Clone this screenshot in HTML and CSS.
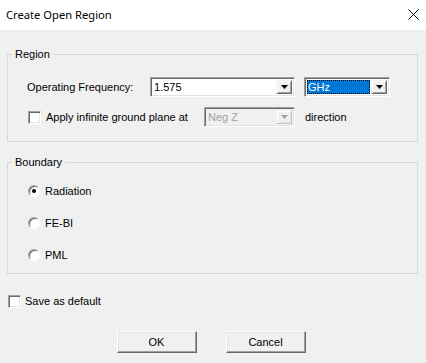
FILE: index.html
```html
<!DOCTYPE html>
<html lang="en">
<head>
    <meta charset="UTF-8" />
    <title>Create Open Region</title>
    <link rel="stylesheet" href="styles.css">
</head>
<body>
<div class="window">
    <div class="titlebar">
        <span class="title">Create Open Region</span>
        <span class="close">
            <svg width="11" height="11" viewBox="0 0 11 11"><path d="M0.5 0.5 L10.5 10.5 M10.5 0.5 L0.5 10.5" stroke="#000" stroke-width="1" fill="none"/></svg>
        </span>
    </div>

    <div class="dialog">
        <fieldset class="group region">
            <legend>Region</legend>
            <div class="group-body">
                <div class="row freq-row">
                    <span class="freq-label">Operating Frequency:</span>
                    <div class="combo combo-freq">
                        <span class="combo-text">1.575</span>
                        <span class="combo-btn"><svg width="7" height="4" viewBox="0 0 7 4"><polygon points="0,0 7,0 3.5,4" fill="#000"/></svg></span>
                    </div>
                    <div class="combo combo-unit">
                        <span class="combo-text selected">GHz</span>
                        <span class="combo-btn"><svg width="7" height="4" viewBox="0 0 7 4"><polygon points="0,0 7,0 3.5,4" fill="#000"/></svg></span>
                    </div>
                </div>
                <div class="row ground-row">
                    <span class="check"></span>
                    <span class="ground-label">Apply infinite ground plane at</span>
                    <div class="combo combo-dir disabled">
                        <span class="combo-text">Neg Z</span>
                        <span class="combo-btn"><svg width="7" height="4" viewBox="0 0 7 4"><polygon points="0,0 7,0 3.5,4" fill="#a0a0a0"/></svg></span>
                    </div>
                    <span class="dir-label">direction</span>
                </div>
            </div>
        </fieldset>

        <fieldset class="group boundary">
            <legend>Boundary</legend>
            <div class="group-body radio-list">
                <div class="row radio-row"><span class="radio checked"></span><span>Radiation</span></div>
                <div class="row radio-row"><span class="radio"></span><span>FE-BI</span></div>
                <div class="row radio-row"><span class="radio"></span><span>PML</span></div>
            </div>
        </fieldset>

        <div class="row save-row">
            <span class="check"></span>
            <span>Save as default</span>
        </div>

        <div class="buttons">
            <span class="btn">OK</span>
            <span class="btn">Cancel</span>
        </div>
    </div>
</div>
</body>
</html>
```

FILE: styles.css
```css
* {
    margin: 0;
    padding: 0;
    box-sizing: border-box;
}
body {
    background: #f0f0f0;
    color: #000;
    font-family: "Liberation Sans", Arial, sans-serif;
    font-size: 11px;
}
.window {
    width: 426px;
    height: 363px;
    overflow: hidden;
}

/* Title bar */
.titlebar {
    height: 30px;
    background: #ffffff;
    display: flex;
    align-items: center;
    justify-content: space-between;
    padding: 0 7px 0 6px;
}
.title {
    font-family: "Noto Sans", sans-serif;
    font-size: 11.2px;
    margin-top: -2px;
}
.close {
    display: flex;
    width: 11px;
    height: 11px;
    margin-top: -1px;
}

/* Dialog body */
.dialog {
    padding: 17px 8px 0 7px;
}
.row {
    display: flex;
    align-items: center;
}

/* Group boxes */
.group {
    border: 1px solid #d8d8d8;
    padding: 0;
    margin: 0;
}
.group legend {
    line-height: 14px;
    margin-left: 4px;
    padding: 0 3px;
}
.region .group-body {
    padding: 16px 0 14px 19px;
}
.freq-row {
    height: 20px;
}
.freq-label {
    width: 123px;
}
.ground-row {
    height: 20px;
    margin-top: 10px;
}
.ground-label {
    width: 158px;
    margin-left: 5px;
}
.dir-label {
    margin-left: 10px;
}

/* Combo boxes */
.combo {
    display: flex;
    height: 20px;
    background: #fff;
    border-top: 1px solid #a0a0a0;
    border-left: 1px solid #a0a0a0;
    border-right: 1px solid #fff;
    border-bottom: 1px solid #fff;
    box-shadow: inset 1px 1px 0 #696969, inset -1px -1px 0 #e3e3e3;
    padding: 2px;
}
.combo-text {
    flex: 1;
    line-height: 14px;
    padding-left: 1px;
}
.combo-btn {
    width: 16px;
    display: flex;
    align-items: center;
    justify-content: center;
    background: #f0f0f0;
    border-top: 1px solid #f0f0f0;
    border-left: 1px solid #f0f0f0;
    border-right: 1px solid #696969;
    border-bottom: 1px solid #696969;
    box-shadow: inset 1px 1px 0 #fff, inset -1px -1px 0 #a0a0a0;
}
.combo-freq {
    width: 145px;
}
.combo-unit {
    width: 86px;
    margin-left: 9px;
}
.combo-unit .selected {
    background: #0078d7;
    color: #fff;
    outline: 1px dotted #000;
    outline-offset: -1px;
    margin-right: 1px;
}
.combo-dir {
    width: 91px;
}
.combo.disabled {
    background: #f0f0f0;
    color: #a0a0a0;
}
.combo.disabled .combo-btn {
    border-right-color: #c8c8c8;
    border-bottom-color: #c8c8c8;
    box-shadow: inset 1px 1px 0 #fff, inset -1px -1px 0 #e3e3e3;
}

/* Check boxes and radios */
.check {
    width: 13px;
    height: 13px;
    margin-left: 1px;
    background: #fff;
    border-top: 1px solid #a0a0a0;
    border-left: 1px solid #a0a0a0;
    border-right: 1px solid #fff;
    border-bottom: 1px solid #fff;
    box-shadow: inset 1px 1px 0 #696969, inset -1px -1px 0 #e3e3e3;
}
.boundary {
    margin-top: 13px;
}
.radio-list {
    display: flex;
    flex-direction: column;
    gap: 16px;
    padding: 14px 0 10px 20px;
}
.radio-row {
    height: 16px;
}
.radio {
    width: 12px;
    height: 12px;
    margin-right: 5px;
    border-radius: 50%;
    background: #fff;
    border: 1px solid;
    border-color: #a0a0a0 #fff #fff #a0a0a0;
    box-shadow: inset 1px 1px 0 #696969;
    display: flex;
    align-items: center;
    justify-content: center;
}
.radio.checked::after {
    content: "";
    width: 4px;
    height: 4px;
    border-radius: 50%;
    background: #000;
}
.save-row {
    height: 16px;
    margin-top: 19px;
    gap: 4px;
}

/* Buttons */
.buttons {
    display: flex;
    justify-content: center;
    gap: 29px;
    margin-top: 22px;
    padding-right: 3px;
}
.btn {
    width: 80px;
    height: 22px;
    display: flex;
    align-items: center;
    justify-content: center;
    background: #f0f0f0;
    border-top: 1px solid #fff;
    border-left: 1px solid #fff;
    border-right: 1px solid #696969;
    border-bottom: 1px solid #696969;
    box-shadow: inset -1px -1px 0 #a0a0a0, inset 1px 1px 0 #e3e3e3;
}
```
